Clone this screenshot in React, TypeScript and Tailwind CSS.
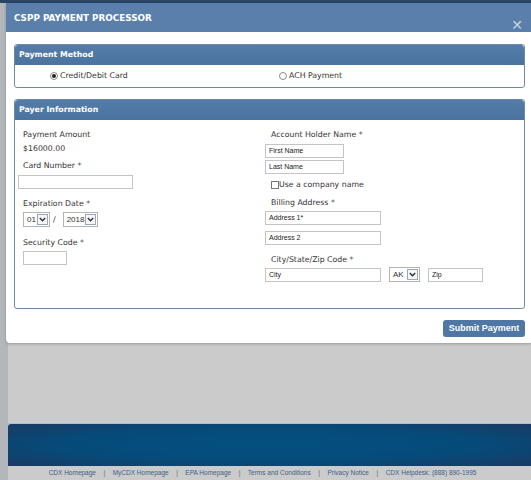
import React from "react";

const label = "pt-[1px] text-[7.8px] leading-[12px] text-[#333] [font-family:'DejaVu_Sans',Verdana,sans-serif]";
const inputText = "text-[7px] leading-[12px] text-[#222] [font-family:'Liberation_Sans',Arial,sans-serif]";

function Field({ w, text, muted }: { w: string; text?: string; muted?: boolean }) {
  return (
    <div className={`${w} h-[14px] border border-[#c4c4c4] bg-white flex items-center pl-[3px]`}>
      {text && <span className={`${inputText} ${muted ? "text-[#9a9a9a]" : ""}`}>{text}</span>}
    </div>
  );
}

function Select({ w, text }: { w: string; text: string }) {
  return (
    <div className={`${w} h-[15px] border border-[#b4b4b4] bg-white flex items-center justify-between pl-[3px] pr-[1px]`}>
      <span className="text-[8px] leading-[12px] text-[#333] [font-family:'Liberation_Sans',Arial,sans-serif]">{text}</span>
      <div className="w-[11px] h-[11px] border border-[#9aa7b6] bg-[#f4f6f9] flex items-center justify-center">
        <svg width="7" height="5" viewBox="0 0 7 5">
          <path d="M0.8 1 L3.5 3.8 L6.2 1" stroke="#2a2a2a" strokeWidth="1.3" fill="none" />
        </svg>
      </div>
    </div>
  );
}

function Radio({ checked }: { checked?: boolean }) {
  return (
    <div className="w-[8px] h-[8px] rounded-full border border-[#8a8a8a] bg-white flex items-center justify-center">
      {checked && <div className="w-[4px] h-[4px] rounded-full bg-[#222]" />}
    </div>
  );
}

function PanelHeader({ title }: { title: string }) {
  return (
    <div className="h-[20px] bg-gradient-to-b from-[#557ca8] to-[#4a73a0] flex items-center pl-[4px] rounded-t-[3px]">
      <span className="text-[7.8px] font-bold text-white [font-family:'DejaVu_Sans',Verdana,sans-serif]">{title}</span>
    </div>
  );
}

export default function App() {
  const links = [
    "CDX Homepage",
    "MyCDX Homepage",
    "EPA Homepage",
    "Terms and Conditions",
    "Privacy Notice",
    "CDX Helpdesk: (888) 890-1995",
  ];
  return (
    <div className="relative w-[531px] h-[480px] overflow-hidden bg-[#cbcbcb]">
      {/* background page */}
      <div className="flex flex-col h-full">
        <div className="h-[3px] bg-[#2a4466]" />
        <div className="flex flex-1">
          <div className="w-[8px] bg-[#b3b7bb]" />
          <div className="flex-1 flex flex-col">
            <div className="flex-1" />
            <div className="h-px bg-[#a9c1d6]" />
            <div className="h-[42px] rounded-tl-[3px] bg-[radial-gradient(ellipse_at_center,#03507f_0%,#054b7a_55%,#1a3a63_100%)]" />
            <div className="h-[14px] flex items-center justify-center gap-[7.5px] pr-[14px] text-[6.5px] text-[#3f5f86] [font-family:'Liberation_Sans',Arial,sans-serif]">
              {links.map((l, i) => (
                <React.Fragment key={l}>
                  {i > 0 && <span className="text-[#5a6a7a]">|</span>}
                  <span>{l}</span>
                </React.Fragment>
              ))}
            </div>
          </div>
        </div>
      </div>

      {/* modal */}
      <div className="absolute left-[6px] top-[3px] w-[527px] bg-white rounded-b-[4px] shadow-[0_1px_3px_rgba(0,0,0,0.25)]">
        <div className="h-[29px] bg-[#5a7faa] flex items-start justify-between pl-[8px] pr-[10px]">
          <span className="mt-[9px] text-[8.8px] leading-[12px] font-bold text-white [font-family:'DejaVu_Sans',Verdana,sans-serif]">
            CSPP PAYMENT PROCESSOR
          </span>
          <span className="mt-[16px] text-[14px] leading-[13px] text-[#c9d5e3] [font-family:'DejaVu_Sans',sans-serif]">✕</span>
        </div>
        <div className="px-[8px] pt-[12px] pb-[6px] flex flex-col">
          {/* Payment Method */}
          <div className="border border-[#6f8aa8] rounded-[3px] overflow-hidden">
            <PanelHeader title="Payment Method" />
            <div className="h-[22px] grid grid-cols-[258px_1fr] items-center">
              <div className="flex items-center gap-[2px] pl-[35px]">
                <Radio checked />
                <span className="text-[7.8px] leading-[12px] text-[#333] [font-family:'DejaVu_Sans',Verdana,sans-serif]">Credit/Debit Card</span>
              </div>
              <div className="flex items-center gap-[2px] pl-[6px]">
                <Radio />
                <span className="text-[7.8px] leading-[12px] text-[#333] [font-family:'DejaVu_Sans',Verdana,sans-serif]">ACH Payment</span>
              </div>
            </div>
          </div>

          {/* Payer Information */}
          <div className="mt-[11px] border border-[#6f8aa8] rounded-[3px] overflow-hidden">
            <PanelHeader title="Payer Information" />
            <div className="h-[188px] grid grid-cols-[250px_1fr]">
              <div className="flex flex-col pl-[3px]">
                <div className={`${label} mt-[8px] pl-[5px]`}>Payment Amount</div>
                <div className={`${label} mt-[1px] pl-[5px]`}>$16000.00</div>
                <div className={`${label} mt-[4px] pl-[5px]`}>Card Number *</div>
                <div className="mt-[3px]"><Field w="w-[115px]" /></div>
                <div className={`${label} mt-[8px] pl-[5px]`}>Expiration Date *</div>
                <div className="mt-[2px] pl-[5px] flex items-center">
                  <Select w="w-[27px]" text="01" />
                  <span className="ml-[3px] mr-[7px] text-[7.8px] leading-[12px] text-[#333] [font-family:'DejaVu_Sans',Verdana,sans-serif]">/</span>
                  <Select w="w-[35px]" text="2018" />
                </div>
                <div className={`${label} mt-[9px] pl-[5px]`}>Security Code *</div>
                <div className="mt-[2px] pl-[5px]"><Field w="w-[44px]" /></div>
              </div>
              <div className="flex flex-col">
                <div className={`${label} mt-[8px] pl-[6px]`}>Account Holder Name *</div>
                <div className="mt-[3px]"><Field w="w-[79px]" text="First Name" /></div>
                <div className="mt-[2px]"><Field w="w-[79px]" text="Last Name" /></div>
                <div className="mt-[4px] pt-[1px] pl-[6px] flex items-center">
                  <div className="w-[8px] h-[8px] border border-[#777] bg-white" />
                  <span className="text-[7.8px] leading-[12px] text-[#333] [font-family:'DejaVu_Sans',Verdana,sans-serif]">Use a company name</span>
                </div>
                <div className={`${label} mt-[5px] pl-[6px]`}>Billing Address *</div>
                <div className="mt-[2px]"><Field w="w-[116px]" text="Address 1*" /></div>
                <div className="mt-[6px]"><Field w="w-[116px]" text="Address 2" /></div>
                <div className={`${label} mt-[8px] pl-[6px]`}>City/State/Zip Code *</div>
                <div className="mt-[1px] flex items-center">
                  <Field w="w-[116px]" text="City" />
                  <div className="ml-[8px]"><Select w="w-[31px]" text="AK" /></div>
                  <div className="ml-[8px]"><Field w="w-[55px]" text="Zip" muted /></div>
                </div>
              </div>
            </div>
          </div>

          <div className="mt-[11px] flex justify-end">
            <button className="w-[82px] h-[17px] rounded-[3px] bg-[#4e77a4] text-white text-[9px] font-bold [font-family:'Liberation_Sans',Arial,sans-serif] flex items-center justify-center">
              Submit Payment
            </button>
          </div>
        </div>
      </div>
    </div>
  );
}
